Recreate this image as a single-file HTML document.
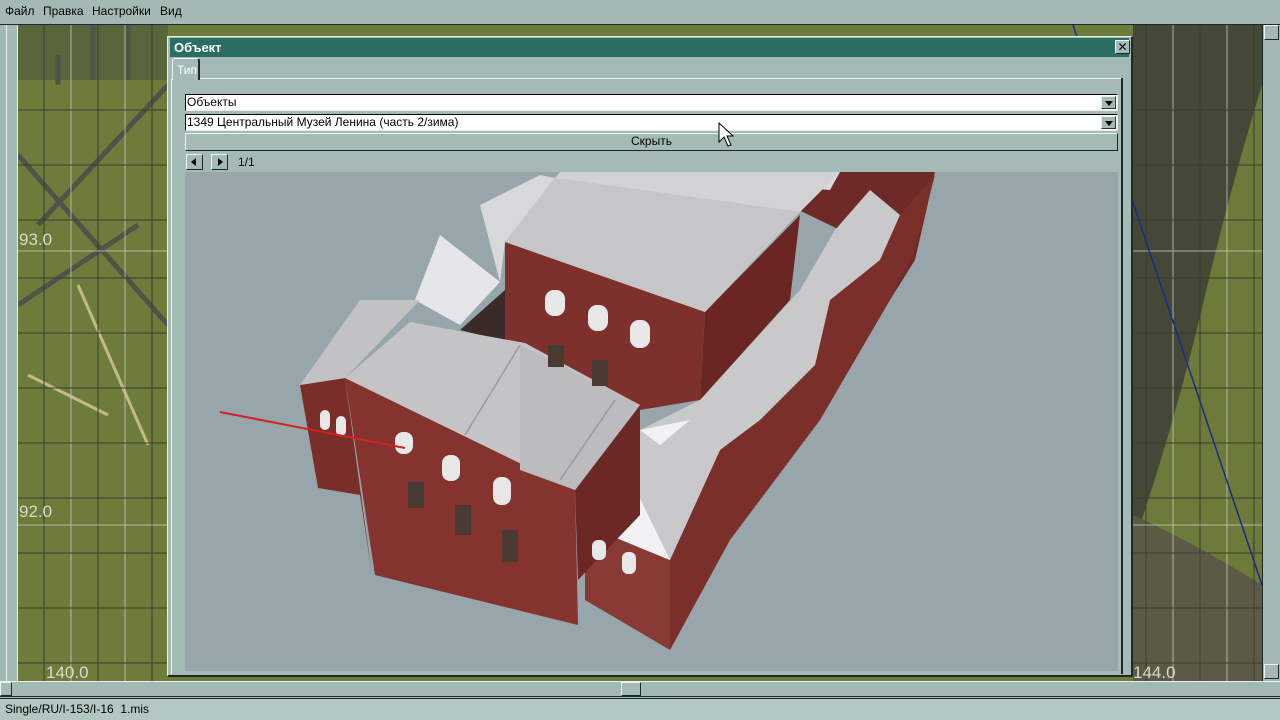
<!DOCTYPE html>
<html><head><meta charset="utf-8"><style>
*{margin:0;padding:0;box-sizing:border-box}
body{width:1280px;height:720px;overflow:hidden;background:#a3bab4;font-family:"Liberation Sans","DejaVu Sans",sans-serif;font-size:12px;color:#000;position:relative}
.abs{position:absolute}
.menu{left:0;top:0;width:1280px;height:24px;background:#a3bab4}
.menu span{position:absolute;top:4px;font-size:12px}
.map{left:18px;top:25px;width:1244px;height:656px;overflow:hidden;background:#6d7c3a}
.win{left:167px;top:36px;width:966px;height:641px;background:#a4bab5;border:1px solid #e8efed;border-right:2px solid #1d2a27;border-bottom:2px solid #1d2a27}
.title{left:2px;top:1px;width:959px;height:19px;background:#2a6e62;color:#fff;font-weight:bold;font-size:13px;padding:2px 4px}
.combo{left:17px;width:933px;height:17px;background:#fff;border:1px solid #000;border-right-color:#e8efed;border-bottom-color:#e8efed;font-size:12px;padding:0 1px;line-height:15px}
.dd{position:absolute;right:1px;top:1px;width:15px;height:13px;background:#a4bab5;border:1px solid #eee;border-right-color:#333;border-bottom-color:#333}
.dd:after{content:"";position:absolute;left:3px;top:4px;border-left:4px solid transparent;border-right:4px solid transparent;border-top:5px solid #000}
.btn{background:#a4bab5;border:1px solid #eef3f1;border-right-color:#1d2a27;border-bottom-color:#1d2a27}
</style></head><body>
<div class="abs menu"><span style="left:5px">Файл</span><span style="left:43px">Правка</span><span style="left:92px">Настройки</span><span style="left:160px">Вид</span></div>
<div class="abs" style="left:0;top:24px;width:1280px;height:1px;background:#1d2a27"></div>
<div class="abs" style="left:0;top:25px;width:18px;height:656px;background:#a3bab4;border-right:1px solid #e8efed"></div>
<div class="abs" style="left:6px;top:25px;width:1px;height:656px;background:#e8efed"></div>
<div class="abs map">
<svg width="1244" height="656" style="position:absolute;left:0;top:0">
<rect x="0" y="0" width="150" height="656" fill="#6d7c3a"/>
<rect x="0" y="0" width="150" height="55" fill="#59653a"/>
<path d="M0 130 L150 300 M20 200 L150 60 M0 280 L120 200 M40 30 L40 60 M75 0 L75 55 M110 0 L110 55" stroke="#4f5348" stroke-width="5" fill="none"/>
<path d="M60 260 L130 420 M10 350 L90 390" stroke="#c5b88a" stroke-width="3" fill="none"/>
<rect x="1115" y="0" width="130" height="656" fill="#454836"/>
<path d="M1244 60 L1244 656 L1115 656 L1115 520 Q1150 420 1180 300 Q1210 170 1244 60Z" fill="#6c7a3a"/>
<path d="M1115 490 Q1180 520 1244 560 L1244 656 L1115 656Z" fill="#5c5a44"/>
<g stroke="#3a3d30" stroke-width="1">
<line x1="26" y1="0" x2="26" y2="656"/><line x1="80" y1="0" x2="80" y2="656"/><line x1="134" y1="0" x2="134" y2="656"/>
<line x1="1128" y1="0" x2="1128" y2="656"/><line x1="1182" y1="0" x2="1182" y2="656"/><line x1="1236" y1="0" x2="1236" y2="656"/>
</g>
<g stroke="#c8cbbd" stroke-width="1" opacity="0.8">
<line x1="53" y1="0" x2="53" y2="656"/><line x1="107" y1="0" x2="107" y2="656"/><line x1="1155" y1="0" x2="1155" y2="656"/><line x1="1209" y1="0" x2="1209" y2="656"/>
<line x1="0" y1="226" x2="1244" y2="226"/><line x1="0" y1="500" x2="1244" y2="500"/>
</g>
<g stroke="#3a3d30" stroke-width="1">
<line x1="0" y1="85" x2="1244" y2="85"/><line x1="0" y1="140" x2="1244" y2="140"/><line x1="0" y1="195" x2="1244" y2="195"/><line x1="0" y1="253" x2="1244" y2="253"/><line x1="0" y1="308" x2="1244" y2="308"/><line x1="0" y1="363" x2="1244" y2="363"/><line x1="0" y1="418" x2="1244" y2="418"/><line x1="0" y1="473" x2="1244" y2="473"/><line x1="0" y1="528" x2="1244" y2="528"/><line x1="0" y1="583" x2="1244" y2="583"/><line x1="0" y1="638" x2="1244" y2="638"/>
</g>
<line x1="1055" y1="0" x2="1244" y2="560" stroke="#1c2a8a" stroke-width="1.5"/>
<text x="1" y="220" fill="#d6dccb" font-size="17">93.0</text>
<text x="1" y="492" fill="#d6dccb" font-size="17">92.0</text>
<text x="28" y="653" fill="#d6dccb" font-size="17">140.0</text>
<text x="1115" y="653" fill="#d6dccb" font-size="17">144.0</text>
</svg>
</div>
<div class="abs" style="left:1262px;top:25px;width:18px;height:656px;background:#a3bab4;border-left:1px solid #1d2a27"></div>
<div class="abs btn" style="left:1264px;top:25px;width:15px;height:15px"></div>
<div class="abs btn" style="left:1264px;top:664px;width:15px;height:15px"></div>
<div class="abs" style="left:0;top:681px;width:1280px;height:16px;background:#a3bab4;border-top:1px solid #e8efed;border-bottom:1px solid #1d2a27"></div>
<div class="abs btn" style="left:0;top:682px;width:12px;height:14px"></div>
<div class="abs btn" style="left:621px;top:682px;width:20px;height:14px"></div>
<div class="abs" style="left:0;top:698px;width:1280px;height:22px;background:#b3c7c2;border-top:1px solid #1d2a27"></div>
<div class="abs" style="left:5px;top:702px;font-size:12px">Single/RU/I-153/I-16&nbsp; 1.mis</div>
<div class="abs win">
 <div class="abs title">Объект</div>
 <div class="abs btn" style="left:947px;top:3px;width:15px;height:14px;font-size:12px;font-weight:bold;line-height:12px;text-align:center">✕</div>
 <div class="abs" style="left:4px;top:21px;width:28px;height:22px;border:1px solid #eef3f1;border-right:2px solid #1d2a27;border-bottom:none;color:#fff;padding:4px 4px;font-size:12px;border-radius:3px 3px 0 0">Тип</div>
 <div class="abs" style="left:32px;top:41px;width:922px;height:1px;background:#eef3f1"></div>
 <div class="abs" style="left:3px;top:42px;width:1px;height:595px;background:#eef3f1"></div>
 <div class="abs" style="left:953px;top:41px;width:2px;height:596px;background:#1d2a27"></div>
 <div class="abs combo" style="top:57px">Объекты<div class="dd"></div></div>
 <div class="abs combo" style="top:77px">1349 Центральный Музей Ленина (часть 2/зима)<div class="dd"></div></div>
 <div class="abs btn" style="left:17px;top:96px;width:933px;height:18px;text-align:center;line-height:15px">Скрыть</div>
 <div class="abs btn" style="left:18px;top:117px;width:17px;height:16px"><div style="position:absolute;left:4px;top:3px;border-top:4px solid transparent;border-bottom:4px solid transparent;border-right:5px solid #000"></div></div>
 <div class="abs btn" style="left:43px;top:117px;width:17px;height:16px"><div style="position:absolute;left:6px;top:3px;border-top:4px solid transparent;border-bottom:4px solid transparent;border-left:5px solid #000"></div></div>
 <div class="abs" style="left:70px;top:118px;font-size:12px">1/1</div>
 <div class="abs" style="left:17px;top:135px;width:933px;height:499px;background:#97a6ab;overflow:hidden">
 <svg width="933" height="499" viewBox="185 172 933 499" style="position:absolute;left:0;top:0">
  <polygon points="720,172 935,172 915,260 890,300 840,230" fill="#6e2a26"/>
  <polygon points="760,172 840,172 830,190 770,185" fill="#d9d9db"/>
  <!-- right wing walls -->
  <polygon points="670,560 720,450 815,365 830,300 880,260 900,215 935,175 915,250 890,300 820,420 730,540 670,650" fill="#7a2f2b"/>
  <polygon points="585,525 670,560 670,650 585,600" fill="#8a3a35"/>
  <!-- right wing roof -->
  <polygon points="585,525 640,430 700,400 800,290 835,230 870,190 900,215 880,260 830,300 815,365 760,420 720,450 670,560" fill="#c9c9cc"/>
  <polygon points="585,525 630,478 670,560" fill="#f2f2f4"/>
  <polygon points="640,430 690,420 660,445" fill="#f2f2f4"/>
  <!-- back block -->
  <polygon points="505,242 705,312 700,400 640,410 505,340" fill="#7e302c"/>
  <polygon points="705,312 800,215 790,300 700,400" fill="#6a2622"/>
  <polygon points="505,242 555,178 800,212 705,312" fill="#c6c6c9"/>
  <polygon points="560,172 840,172 800,212 555,178" fill="#d2d2d4"/>
  <polygon points="460,330 505,290 505,340 520,345" fill="#3a2a28"/>
  <polygon points="440,235 500,282 460,325 415,300" fill="#e6e6e8"/>
  <polygon points="480,205 540,175 555,178 505,242 500,282" fill="#d8d8da"/>
  <!-- left wing -->
  <polygon points="300,385 345,378 372,575 360,495 318,488" fill="#7a2e2a"/>
  <polygon points="300,385 360,300 420,300 345,378" fill="#c2c2c5"/>
  <!-- main block -->
  <polygon points="345,378 575,490 578,625 375,575" fill="#84332e"/>
  <polygon points="575,490 640,405 640,515 578,580" fill="#6c2824"/>
  <polygon points="345,378 410,322 525,343 640,405 575,490" fill="#c4c4c7"/>
  <polygon points="520,345 640,405 575,490 520,470" fill="#bcbcbf"/>
  <line x1="520" y1="345" x2="465" y2="435" stroke="#9a9a9d" stroke-width="1.5"/>
  <line x1="615" y1="400" x2="560" y2="480" stroke="#9a9a9d" stroke-width="1.5"/>
  <g fill="#e8e8e8">
   <rect x="395" y="432" width="18" height="22" rx="8"/><rect x="442" y="455" width="18" height="26" rx="8"/><rect x="493" y="477" width="18" height="28" rx="8"/>
   <rect x="545" y="290" width="20" height="26" rx="9"/><rect x="588" y="305" width="20" height="26" rx="9"/><rect x="630" y="320" width="20" height="28" rx="9"/>
   <rect x="592" y="540" width="14" height="20" rx="6"/><rect x="622" y="552" width="14" height="22" rx="6"/>
   <rect x="320" y="410" width="10" height="20" rx="5"/><rect x="336" y="416" width="10" height="20" rx="5"/>
  </g>
  <g fill="#4a3a34">
   <rect x="408" y="482" width="16" height="26"/><rect x="455" y="505" width="16" height="30"/><rect x="502" y="530" width="16" height="32"/>
   <rect x="548" y="345" width="16" height="22"/><rect x="592" y="360" width="16" height="26"/>
  </g>
  <line x1="220" y1="412" x2="405" y2="448" stroke="#d42020" stroke-width="2"/>
 </svg>
 </div>
</div>
<svg class="abs" style="left:718px;top:122px" width="16" height="26"><path d="M1 1 L1 20 L6 15 L10 24 L13 23 L9 14 L15 14 Z" fill="#fff" stroke="#000"/></svg>
</body></html>
